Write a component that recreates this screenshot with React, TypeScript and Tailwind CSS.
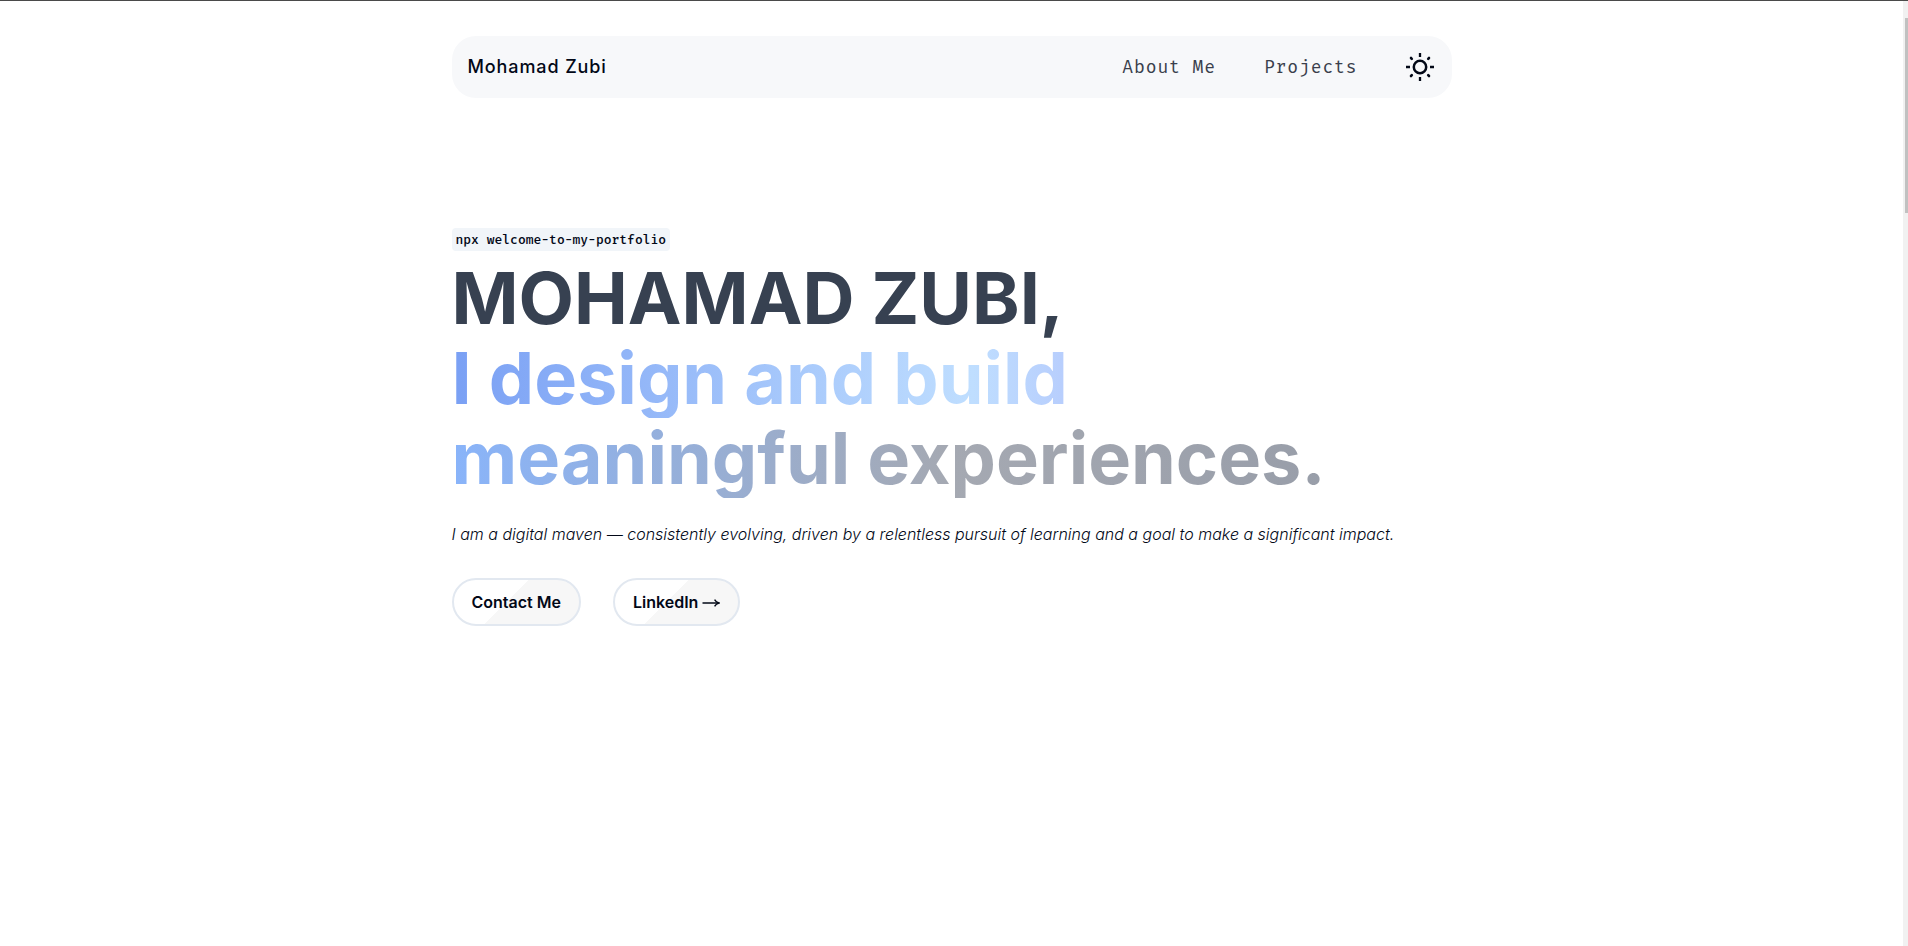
const buttonClass =
  'inline-flex h-12 items-center rounded-full border-2 border-[#e2e8f0] bg-[linear-gradient(135deg,#ffffff_44%,#f7f7f7_44%)] px-[18px] text-base font-semibold text-[#020817]';

const lineClass = 'block w-full bg-clip-text text-transparent';

function SunIcon() {
  return (
    <svg viewBox="0 0 28 28" className="size-7" fill="none" stroke="currentColor" aria-hidden="true">
      <circle cx="14" cy="14" r="6.2" strokeWidth="2.5" />
      <path d="M14 0v4M14 24v4M0 14h4M24 14h4" strokeWidth="2.3" />
      <path d="M5 5l.8.8M22.2 22.2l.8.8M5 23l.8-.8M22.2 5.8l.8-.8" strokeWidth="2.6" strokeLinecap="round" />
    </svg>
  );
}

function ArrowIcon() {
  return (
    <svg viewBox="0 0 18 10" className="mt-[2px] h-[10px] w-[18px]" fill="none" stroke="currentColor" aria-hidden="true">
      <path d="M0.5 5H16" strokeWidth="1.5" />
      <path d="M12.6 1.6Q14 4.2 17 5Q14 5.8 12.6 8.4" strokeWidth="1.4" />
    </svg>
  );
}

export default function App() {
  return (
    <div className="flex min-h-screen border-t border-[#4a4a4a] bg-white font-['Inter',sans-serif] text-[#020817]">
      <div className="flex-1 px-6">
        <div className="mx-auto max-w-[1000px]">
          <header className="mt-[35px] flex h-[62px] items-center justify-between rounded-3xl bg-[#f7f8fa] pr-[18px] pl-4">
            <a href="#home" className="text-lg font-medium tracking-wider">
              Mohamad Zubi
            </a>
            <nav className="flex items-center gap-12 font-['Fira_Mono','Fira_Code','Liberation_Mono',monospace] text-lg tracking-wider text-[#020817]">
              <a href="#about" className="text-[#3a3f4c]">
                About Me
              </a>
              <a href="#projects" className="text-[#3a3f4c]">
                Projects
              </a>
              <button type="button" aria-label="Toggle theme">
                <SunIcon />
              </button>
            </nav>
          </header>

          <main className="mt-[130px] flex flex-col items-start">
            <code className="rounded bg-[#f1f5f9] px-1 py-[2px] font-['Fira_Mono','Liberation_Mono',monospace] text-[13px] leading-[19px] font-medium">
              npx welcome-to-my-portfolio
            </code>
            <h1 className="mt-[7px] w-full text-7xl leading-[80px] font-bold text-[#374151]">
              <span className="block">MOHAMAD ZUBI,</span>
              <span className={`${lineClass} bg-[linear-gradient(90deg,#7aa0f4_0%,#bfdeff_52%,#b4c6fc_66%,#b4c6fc_100%)]`}>
                I design and build
              </span>
              <span className={`${lineClass} bg-[linear-gradient(90deg,#89b4fa_0%,#a5a9b2_50%,#949aa6_100%)]`}>
                meaningful experiences.
              </span>
            </h1>
            <p className="mt-6 text-base leading-6 font-light italic">
              I am a digital maven — consistently evolving, driven by a relentless pursuit of learning and a goal to make a
              significant impact.
            </p>
            <div className="mt-8 flex gap-8">
              <button type="button" className={buttonClass}>
                Contact Me
              </button>
              <a href="#linkedin" className={`${buttonClass} gap-1`}>
                LinkedIn
                <ArrowIcon />
              </a>
            </div>
          </main>
        </div>
      </div>
      <div className="flex w-[5px] flex-col bg-[#f1f1f1] pt-[17px] pl-[2px]" aria-hidden="true">
        <div className="h-[195px] bg-[#c1c1c1]" />
      </div>
    </div>
  );
}
